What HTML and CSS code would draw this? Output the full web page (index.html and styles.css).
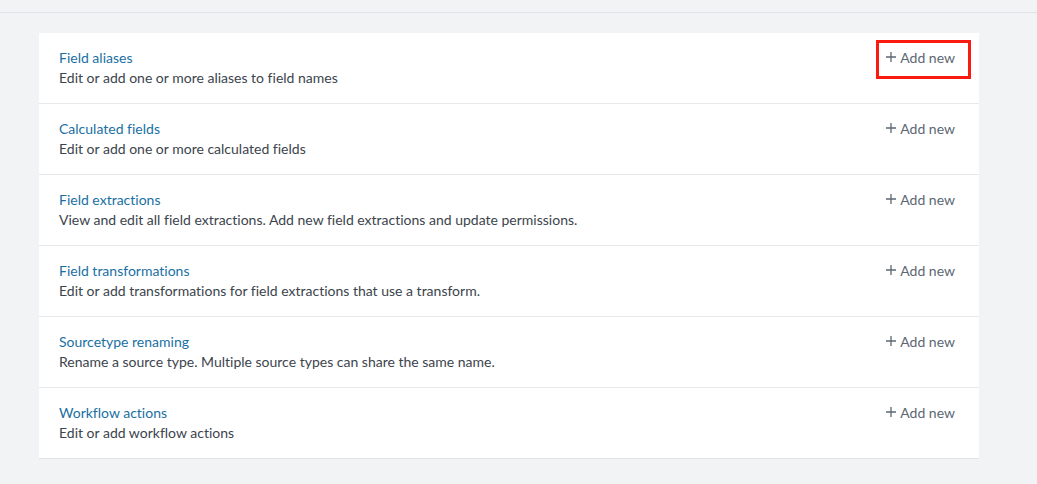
FILE: index.html
```html
<!DOCTYPE html>
<html>
<head>
<meta charset="utf-8">
<link rel="stylesheet" href="styles.css">
</head>
<body>
<div class="topbar"></div>
<main class="page">
  <section class="card">
    <div class="row">
      <div class="info">
        <a class="title" href="#">Field aliases</a>
        <div class="desc">Edit or add one or more aliases to field names</div>
      </div>
      <button class="add highlight"><svg class="plus" viewBox="0 0 10 10" width="10" height="10"><path d="M5 0v10M0 5h10"/></svg>Add new</button>
    </div>
    <div class="row">
      <div class="info">
        <a class="title" href="#">Calculated fields</a>
        <div class="desc">Edit or add one or more calculated fields</div>
      </div>
      <button class="add"><svg class="plus" viewBox="0 0 10 10" width="10" height="10"><path d="M5 0v10M0 5h10"/></svg>Add new</button>
    </div>
    <div class="row">
      <div class="info">
        <a class="title" href="#">Field extractions</a>
        <div class="desc">View and edit all field extractions. Add new field extractions and update permissions.</div>
      </div>
      <button class="add"><svg class="plus" viewBox="0 0 10 10" width="10" height="10"><path d="M5 0v10M0 5h10"/></svg>Add new</button>
    </div>
    <div class="row">
      <div class="info">
        <a class="title" href="#">Field transformations</a>
        <div class="desc">Edit or add transformations for field extractions that use a transform.</div>
      </div>
      <button class="add"><svg class="plus" viewBox="0 0 10 10" width="10" height="10"><path d="M5 0v10M0 5h10"/></svg>Add new</button>
    </div>
    <div class="row">
      <div class="info">
        <a class="title" href="#">Sourcetype renaming</a>
        <div class="desc">Rename a source type. Multiple source types can share the same name.</div>
      </div>
      <button class="add"><svg class="plus" viewBox="0 0 10 10" width="10" height="10"><path d="M5 0v10M0 5h10"/></svg>Add new</button>
    </div>
    <div class="row">
      <div class="info">
        <a class="title" href="#">Workflow actions</a>
        <div class="desc">Edit or add workflow actions</div>
      </div>
      <button class="add"><svg class="plus" viewBox="0 0 10 10" width="10" height="10"><path d="M5 0v10M0 5h10"/></svg>Add new</button>
    </div>
  </section>
</main>
</body>
</html>
```
FILE: styles.css
```css
html, body {
  margin: 0;
  padding: 0;
  background: #f2f3f5;
  font-family: Lato, "Open Sans", sans-serif;
  font-size: 14px;
  font-variant-ligatures: none;
}
.topbar {
  height: 12px;
  border-bottom: 1px solid #e1e3e6;
}
.page {
  padding: 20px 0 0 39px;
}
.card {
  width: 940px;
  background: #fff;
  border-bottom: 1px solid #e1e3e6;
}
.row {
  display: flex;
  justify-content: space-between;
  align-items: flex-start;
  padding: 15px 24px 15px 20px;
  border-bottom: 1px solid #e6e8eb;
}
.row:last-child {
  border-bottom: none;
}
.info {
  display: flex;
  flex-direction: column;
}
.title {
  color: #1a6fa3;
  text-decoration: none;
  line-height: 20px;
}
.desc {
  color: #3c444d;
  line-height: 20px;
}
.add {
  position: relative;
  display: inline-flex;
  align-items: center;
  height: 20px;
  margin-top: -1px;
  padding: 0;
  border: none;
  background: none;
  font: inherit;
  color: #5c6773;
  cursor: pointer;
}
.plus {
  margin-right: 4px;
  stroke: #5c6773;
  stroke-width: 1.3;
  fill: none;
}
.highlight::after {
  content: "";
  position: absolute;
  left: -10px;
  right: -16px;
  top: -7px;
  bottom: -12px;
  border: 3px solid #fa1a10;
}
```
